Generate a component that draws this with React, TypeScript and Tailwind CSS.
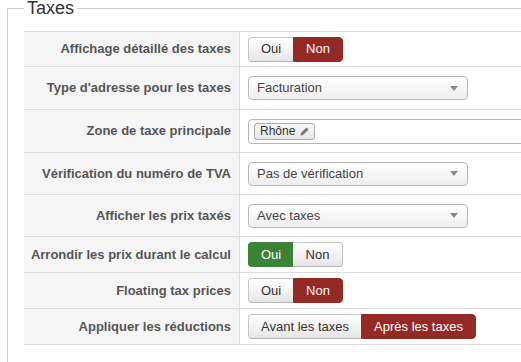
import React from "react";

const font = { fontFamily: '"Liberation Sans", Arial, Helvetica, sans-serif' };

function Row({ label, h, children }: { label: string; h: string; children: React.ReactNode }) {
  return (
    <div className={`flex border-b border-[#dddddd] ${h}`}>
      <div className="w-[216px] shrink-0 bg-[#f5f5f5] border-r border-[#dddddd] flex items-center justify-end pr-2 text-[13px] font-bold text-[#555555]">
        {label}
      </div>
      <div className="flex-1 flex items-center pl-2">{children}</div>
    </div>
  );
}

const btnBase =
  "h-[25px] flex items-center justify-center text-[13px] border";
const btnOff =
  "bg-gradient-to-b from-[#ffffff] to-[#e6e6e6] text-[#333333] border-[#c5c5c5] border-b-[#b3b3b3]";
const btnRed = "bg-[#942a25] text-white border-[#942a25]";
const btnGreen = "bg-[#3b8336] text-white border-[#3b8336]";

function YesNo({ value, yesColor }: { value: "yes" | "no"; yesColor?: "green" }) {
  const yesActive = value === "yes";
  return (
    <div className="flex">
      <div
        className={`${btnBase} w-[45px] rounded-l-[4px] border-r-0 ${
          yesActive ? (yesColor === "green" ? btnGreen : btnRed) : btnOff
        }`}
      >
        Oui
      </div>
      <div
        className={`${btnBase} w-[50px] rounded-r-[4px] ${yesActive ? btnOff + " border-l-0" : btnRed}`}
      >
        Non
      </div>
    </div>
  );
}

function Select({ text }: { text: string }) {
  return (
    <div className="w-[220px] h-[24px] rounded-[4px] border border-[#b8b8b8] bg-gradient-to-b from-[#ffffff] to-[#eeeeee] flex items-center justify-between pl-2 pr-[9px] text-[13px] text-[#444444]">
      <span>{text}</span>
      <svg width="8" height="5" viewBox="0 0 8 5">
        <polygon points="0,0 8,0 4,5" fill="#888888" />
      </svg>
    </div>
  );
}

export default function App() {
  return (
    <div className="w-[521px] h-[362px] overflow-hidden bg-white" style={font}>
      <fieldset className="ml-[7px] w-[560px] border border-[#cccccc] pl-4 pt-[15px] pb-6">
        <legend className="px-[3px] text-[18px] leading-[16px] text-[#333333]">Taxes</legend>
        <div className="border-t border-[#dddddd]">
          <Row label="Affichage détaillé des taxes" h="h-[35px]">
            <YesNo value="no" />
          </Row>
          <Row label="Type d'adresse pour les taxes" h="h-[43px]">
            <Select text="Facturation" />
          </Row>
          <Row label="Zone de taxe principale" h="h-[43px]">
            <div className="flex-1 h-[25px] rounded-l-[4px] border border-[#b5b5b5] bg-white flex items-center pl-[5px]">
              <div className="h-[17px] rounded-[3px] border border-[#aaaaaa] bg-gradient-to-b from-[#f7f7f7] to-[#e8e8e8] flex items-center pl-[5px] pr-[5px] gap-[5px] text-[12px] text-[#333333]">
                <span>Rhône</span>
                <svg width="9" height="9" viewBox="0 0 9 9">
                  <polygon points="6.5,0.5 8.5,2.5 3,8 0.5,8.5 1,6" fill="#777777" />
                </svg>
              </div>
            </div>
          </Row>
          <Row label="Vérification du numéro de TVA" h="h-[42px]">
            <Select text="Pas de vérification" />
          </Row>
          <Row label="Afficher les prix taxés" h="h-[42px]">
            <Select text="Avec taxes" />
          </Row>
          <Row label="Arrondir les prix durant le calcul" h="h-[36px]">
            <YesNo value="yes" yesColor="green" />
          </Row>
          <Row label="Floating tax prices" h="h-[36px]">
            <YesNo value="no" />
          </Row>
          <Row label="Appliquer les réductions" h="h-[36px]">
            <div className="flex">
              <div className={`${btnBase} w-[113px] rounded-l-[4px] border-r-0 ${btnOff}`}>Avant les taxes</div>
              <div className={`${btnBase} w-[115px] rounded-r-[4px] ${btnRed}`}>Après les taxes</div>
            </div>
          </Row>
        </div>
      </fieldset>
    </div>
  );
}
